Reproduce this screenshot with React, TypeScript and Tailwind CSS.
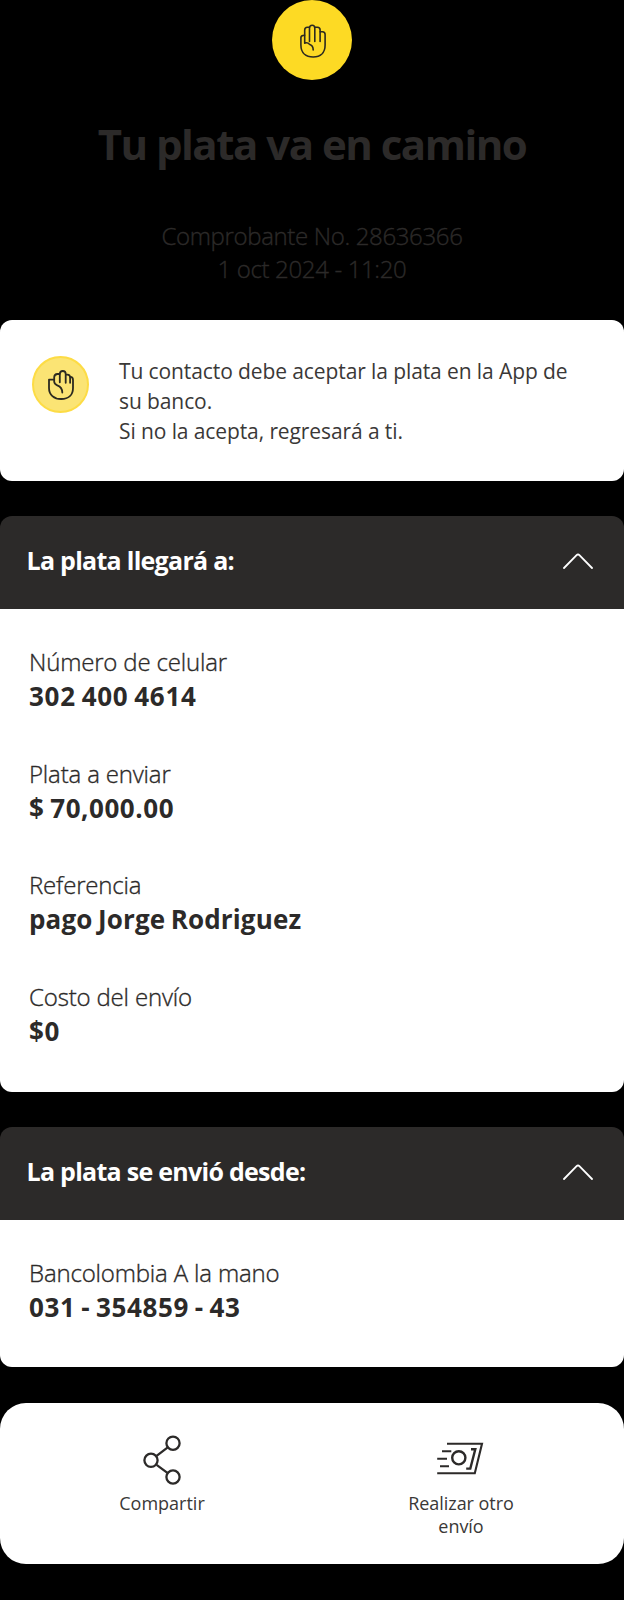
import React from 'react';

function OpenHand({ className }: { className?: string }) {
  return (
    <svg viewBox="0 0 26 34" className={className} fill="none" stroke="#2c2a20" strokeWidth="1.6" strokeLinecap="round" strokeLinejoin="round">
      <path d="M9.5 17.5V3.9Q9.5 1.2 12.2 1.2Q14.8 1.2 14.8 3.9V17.5" />
      <path d="M9.4 3.2H7.4Q4.7 3.2 4.7 6V19.3" />
      <path d="M14.9 3.2H17.4Q20.1 3.2 20.1 6V17.5" />
      <path d="M20.2 7.7H22.4Q25.1 7.8 25.1 10.5V21C25.1 28.8 20.4 33 13.2 33C5.8 33 .9 28.8 .9 21V13.6Q.9 11.2 4.6 11.2" />
      <path d="M4.9 18.9Q8.2 18.3 9.3 20.2Q13.3 21.3 13.2 26" />
    </svg>
  );
}

function CurledHand({ className }: { className?: string }) {
  return (
    <svg viewBox="0 0 26 30" className={className} fill="none" stroke="#2c2a20" strokeWidth="1.8" strokeLinecap="round" strokeLinejoin="round">
      <path d="M11.8 12.3V4Q11.9 1 14.8 1Q17.7 1 17.7 4V12.8" />
      <path d="M11.6 4H9.5Q6.2 4.2 6.2 7.2V11.8Q6.3 14 9.3 15.4Q14.3 17.4 14.3 22.5" />
      <path d="M17.9 4.6H19.4Q22.1 4.8 22.1 7.6V12.8" />
      <path d="M22.3 6.9Q25 7.1 25 9.9V18C25 25 20.5 29 13.2 29C6 29 1 24.8 1 18V9.6H5.8" />
    </svg>
  );
}

function ShareIcon() {
  return (
    <svg viewBox="0 0 38 50" className="mr-[1px] h-[50px] w-[38px]" fill="none" stroke="#2c2a29" strokeWidth="2.3">
      <circle cx="8" cy="25.3" r="6.6" />
      <circle cx="30" cy="8.2" r="6.6" />
      <circle cx="30" cy="42" r="6.6" />
      <path d="M13.6 20.8L24.4 12.6M13.6 29.8L24.4 37.8" />
    </svg>
  );
}

function SendMoneyIcon() {
  return (
    <svg viewBox="0 0 48 36" className="mr-[3px] h-9 w-12" fill="none" stroke="#2c2a29" strokeWidth="2.1">
      <path d="M11 2.8H46L38.8 32.3H1.2" />
      <circle cx="22.8" cy="16.8" r="6.6" strokeWidth="2.4" />
      <path d="M6 10.3H15.3M1.2 17.8H11M4 25.2H13" />
      <path d="M35 8.2H39.3L34.3 27.6H30.2" strokeWidth="2.4" />
    </svg>
  );
}

function SectionHeader({ title }: { title: string }) {
  return (
    <div className="flex h-[93px] items-center justify-between rounded-t-[12px] bg-[#2c2a29] pr-[31px] pb-[3px] pl-[26.5px]">
      <h2 className="text-[25px] font-bold tracking-[-0.72px] whitespace-nowrap text-white">{title}</h2>
      <svg viewBox="0 0 30 16" className="h-4 w-[30px]" fill="none" stroke="#fff" strokeWidth="1.8" strokeLinecap="round" strokeLinejoin="round">
        <path d="M1 15L13.6 2.2Q15 .8 16.4 2.2L29 15" />
      </svg>
    </div>
  );
}

function Field({ label, value, tracking = 'tracking-[0.7px]' }: { label: string; value: string; tracking?: string }) {
  return (
    <div className="whitespace-nowrap">
      <div className="text-[24px] leading-[34px] font-light tracking-[-0.17px] [-webkit-text-stroke:0.35px_#2c2a29]">{label}</div>
      <div className={`text-[26px] leading-[34px] font-bold [word-spacing:-1.5px] ${tracking}`}>{value}</div>
    </div>
  );
}

export default function App() {
  return (
    <div className="flex h-[1600px] w-[624px] flex-col bg-black font-['Open_Sans','Noto_Sans',sans-serif] text-[#2c2a29]">
      <header className="flex h-[320px] shrink-0 flex-col items-center text-center">
        <div className="flex size-20 items-center justify-center rounded-full bg-[#fdda24] pt-[2px] pl-[1px]">
          <OpenHand className="h-[34px] w-[26px]" />
        </div>
        <h1 className="mt-[34px] text-[42px] leading-[60px] font-bold tracking-[-1.5px] whitespace-nowrap">Tu plata va en camino</h1>
        <div className="mt-[45px] text-[24px] leading-[33px] font-light tracking-[-0.35px] [-webkit-text-stroke:0.35px_#2c2a29]">
          <p>Comprobante No. 28636366</p>
          <p>1 oct 2024 - 11:20</p>
        </div>
      </header>

      <section className="flex h-[161px] shrink-0 rounded-[12px] bg-white pt-9 pl-8">
        <div className="flex size-[57px] shrink-0 items-center justify-center rounded-full border-2 border-[#fddc45] bg-[#fbe474]">
          <CurledHand className="h-[30px] w-[26px]" />
        </div>
        <div className="ml-[30px] text-[21px] leading-[30px] tracking-[-0.1px] whitespace-nowrap text-[#3a3837]">
          <p>Tu contacto debe aceptar la plata en la App de</p>
          <p>su banco.</p>
          <p>Si no la acepta, regresará a ti.</p>
        </div>
      </section>

      <section className="mt-[35px] flex h-[576px] shrink-0 flex-col">
        <SectionHeader title="La plata llegará a:" />
        <div className="flex grow flex-col gap-[43.7px] rounded-b-[12px] bg-white pt-9 pl-[29px]">
          <Field label="Número de celular" value="302 400 4614" />
          <Field label="Plata a enviar" value="$ 70,000.00" tracking="tracking-[0.55px]" />
          <Field label="Referencia" value="pago Jorge Rodriguez" tracking="tracking-[0.15px]" />
          <Field label="Costo del envío" value="$0" />
        </div>
      </section>

      <section className="mt-[35px] flex h-[240px] shrink-0 flex-col">
        <SectionHeader title="La plata se envió desde:" />
        <div className="grow rounded-b-[12px] bg-white pt-[35.5px] pl-[29px]">
          <Field label="Bancolombia A la mano" value="031 - 354859 - 43" tracking="tracking-[0.6px]" />
        </div>
      </section>

      <nav className="mt-9 grid h-[161px] shrink-0 grid-cols-2 rounded-[26px] bg-white px-3 text-center text-[18px] leading-[23.5px] text-[#3a3837]">
        <button className="flex flex-col items-center pt-8">
          <ShareIcon />
          <span className="mt-[6.5px]">Compartir</span>
        </button>
        <button className="flex flex-col items-center pt-[38px] pr-[2px]">
          <SendMoneyIcon />
          <span className="mt-[14.5px] tracking-[-0.05px]">Realizar otro<br />envío</span>
        </button>
      </nav>
    </div>
  );
}
